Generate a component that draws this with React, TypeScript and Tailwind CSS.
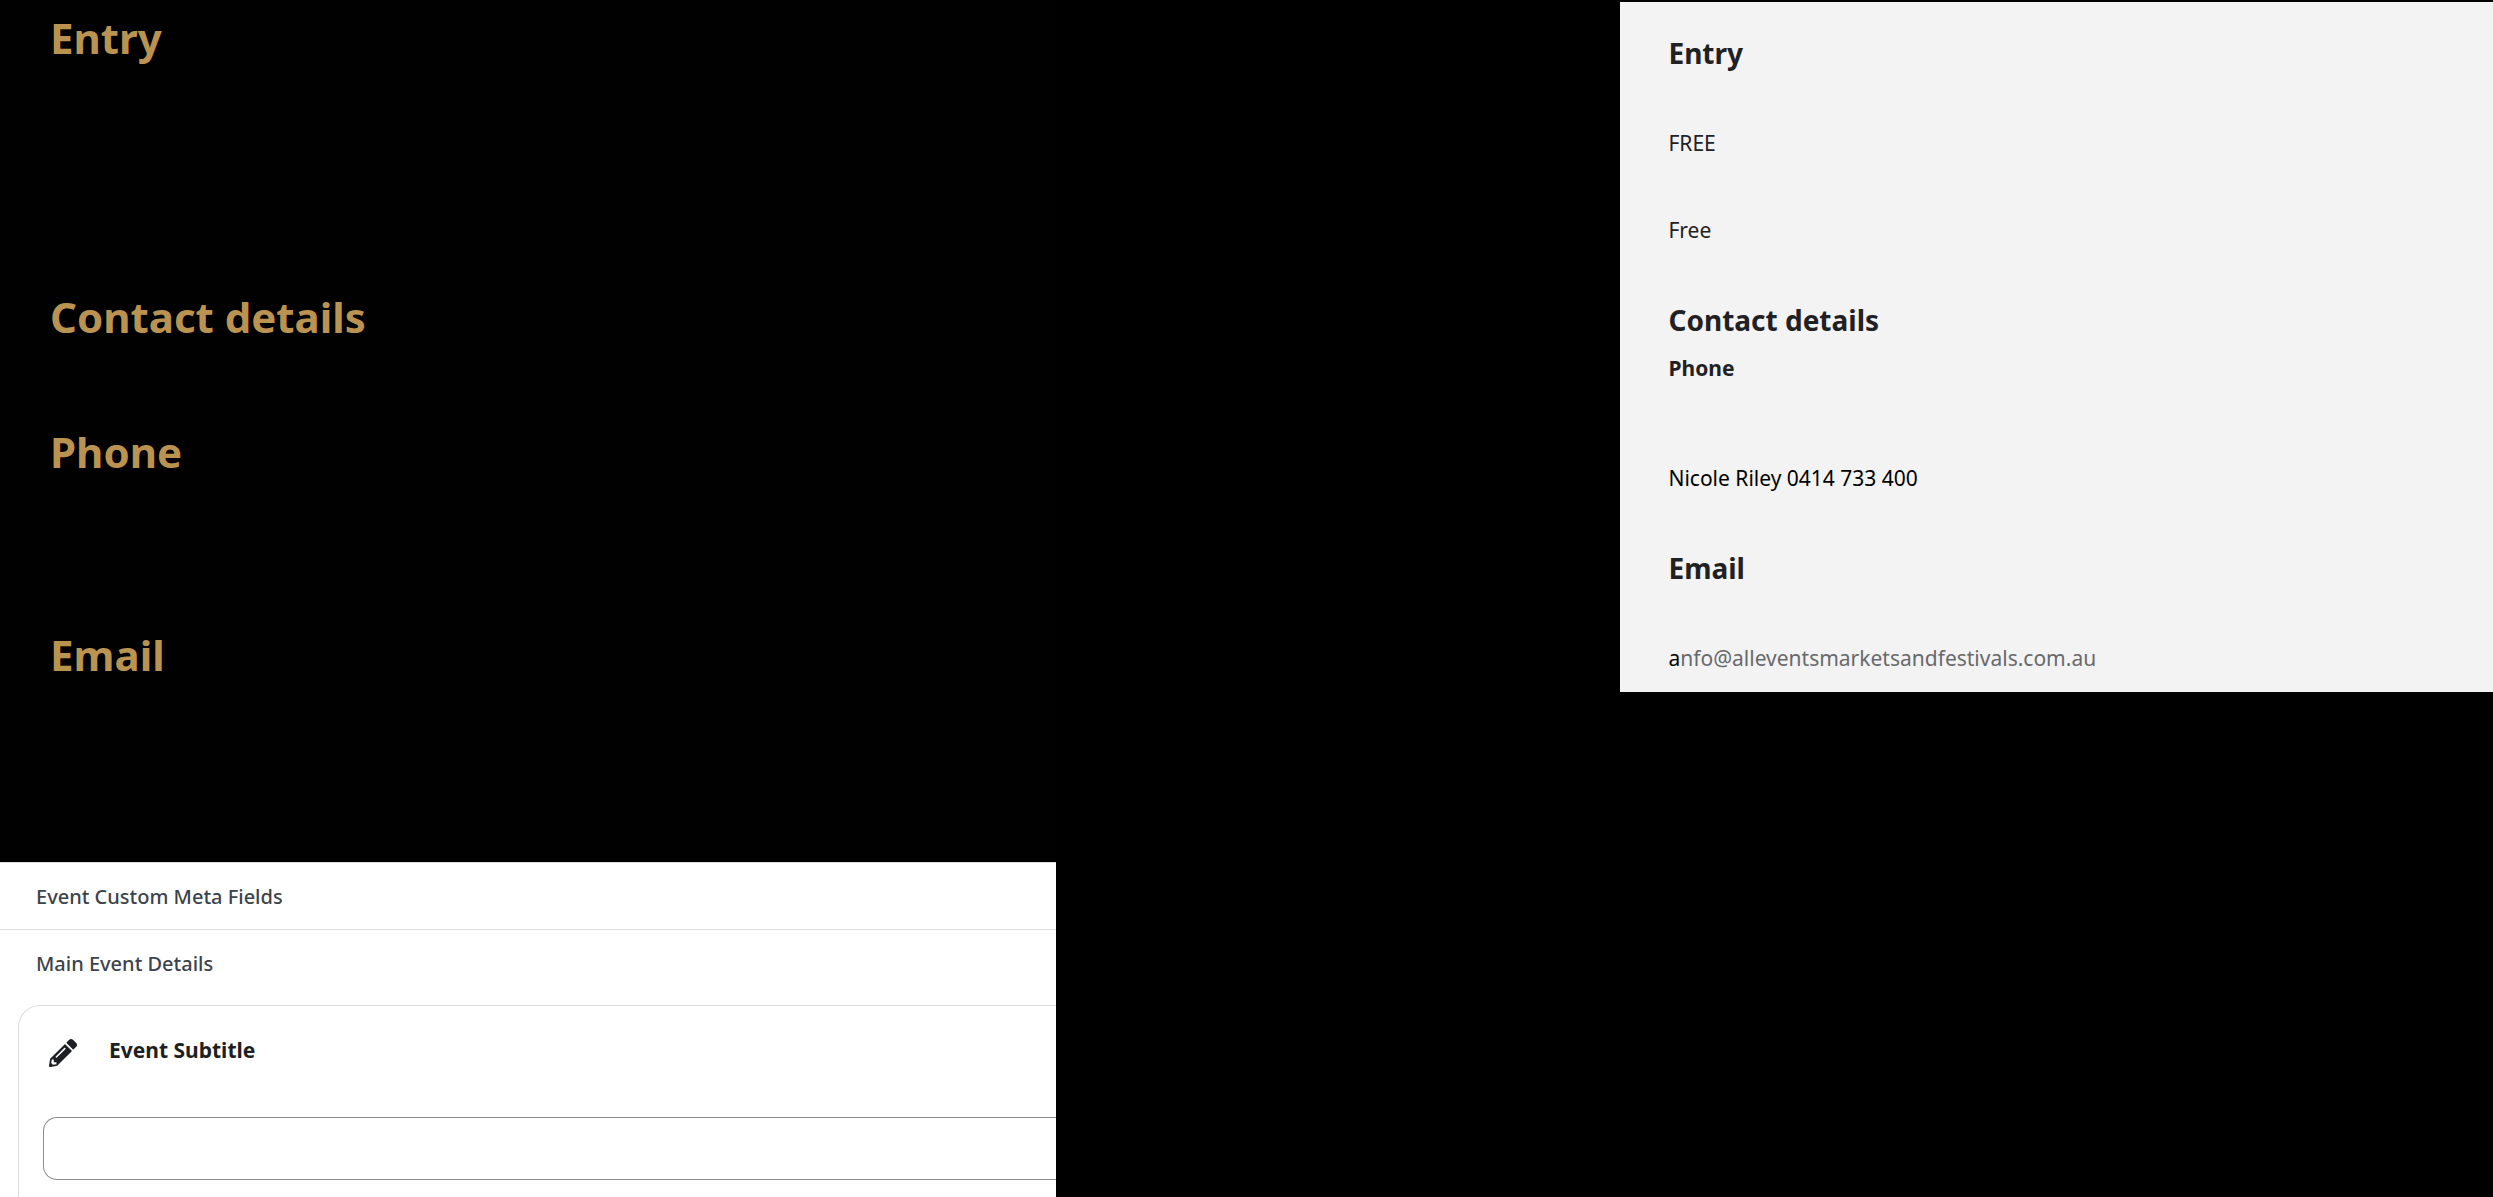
import { FaPencilAlt } from "react-icons/fa";

const previewHeading = "text-[42px] leading-[60px] font-bold";
const panelHeading = "text-[28px] leading-[40px] font-bold";
const panelText = "text-[21px] leading-[32px]";

function EventPreview() {
  return (
    <section className="h-[862px] bg-[#000100] pl-[50px] pt-2 text-[#bb9350]">
      <h2 className={previewHeading}>Entry</h2>
      <h2 className={`mt-[219px] ${previewHeading}`}>Contact details</h2>
      <h2 className={`mt-[75px] ${previewHeading}`}>Phone</h2>
      <h2 className={`mt-[143px] ${previewHeading}`}>Email</h2>
    </section>
  );
}

function MetaFields() {
  return (
    <section className="grow overflow-hidden border-t border-[#dcdcde] bg-white text-[#3c434a]">
      <h2 className="border-b border-[#dcdcde] pt-[18px] pb-4 pl-9 text-[20px] leading-[32px] font-medium">
        Event Custom Meta Fields
      </h2>
      <h3 className="pt-[18px] pb-[25px] pl-9 text-[20px] leading-[32px] font-medium">Main Event Details</h3>
      <div className="ml-[18px] h-[192px] rounded-tl-[22px] border-t border-l border-[#dcdcde] pl-6">
        <div className="flex items-center gap-8 pt-[26px] pl-[6px] text-[#1d1f23]">
          <FaPencilAlt className="mt-[7px] size-7" aria-hidden="true" />
          <label htmlFor="event-subtitle" className="text-[21px] leading-[32px] font-bold">
            Event Subtitle
          </label>
        </div>
        <input
          id="event-subtitle"
          type="text"
          className="mt-[50px] block h-[63px] w-full rounded-l-[14px] border border-r-0 border-[#8c8f94] bg-white px-4 text-[21px]"
        />
      </div>
    </section>
  );
}

function EntryPanel() {
  return (
    <aside className="mt-[2px] w-[35%] self-start bg-[#f3f3f3] pt-[31px] pb-[18px] pl-[48px] text-[#1f2124]">
      <h2 className={panelHeading}>Entry</h2>
      <p className={`mt-[54px] ${panelText}`}>FREE</p>
      <p className={`mt-[55px] ${panelText}`}>Free</p>
      <h2 className={`mt-[54px] ${panelHeading}`}>Contact details</h2>
      <h3 className={`mt-[12px] font-bold ${panelText}`}>Phone</h3>
      <p className={`mt-[78px] text-black ${panelText}`}>Nicole Riley 0414 733 400</p>
      <h2 className={`mt-[54px] ${panelHeading}`}>Email</h2>
      <p className={`mt-[54px] text-black ${panelText}`}>
        a
        <a href="mailto:nfo@alleventsmarketsandfestivals.com.au" className="text-[#69696b]">
          nfo@alleventsmarketsandfestivals.com.au
        </a>
      </p>
    </aside>
  );
}

export default function App() {
  return (
    <main className="flex min-h-screen justify-between bg-black font-['Noto_Sans','Open_Sans',sans-serif]">
      <div className="flex w-[42.36%] flex-col">
        <EventPreview />
        <MetaFields />
      </div>
      <EntryPanel />
    </main>
  );
}
